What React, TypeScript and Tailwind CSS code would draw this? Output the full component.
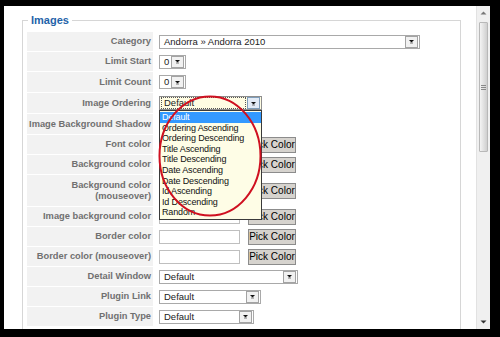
import React from "react";

const ordering = [
  "Default",
  "Ordering Ascending",
  "Ordering Descending",
  "Title Ascending",
  "Title Descending",
  "Date Ascending",
  "Date Descending",
  "Id Ascending",
  "Id Descending",
  "Random",
];

function Arrow({ focused }: { focused?: boolean }) {
  return (
    <div
      className={
        "mr-px flex h-[12px] w-[13px] shrink-0 items-center justify-center border " +
        (focused ? "border-[#7f9db9] bg-[#e3ebf6]" : "border-[#a3a3a3] bg-[#f1f1f1]")
      }
    >
      <svg width="7" height="5" viewBox="0 0 7 5">
        <path d="M1 1h5L3.5 3.5z" fill="#111" />
        <path d="M2 4h3" stroke="#555" strokeWidth="0.8" />
      </svg>
    </div>
  );
}

function Select({ w, text }: { w: string; text: string }) {
  return (
    <div className={`${w} flex h-[14px] items-center border border-[#a9a9a9] bg-white`}>
      <span className="flex-1 whitespace-nowrap pl-[4px] text-[9.5px] leading-none text-[#222]">{text}</span>
      <Arrow />
    </div>
  );
}

function ColorPick() {
  return (
    <div className="flex items-center gap-[8px]">
      <div className="h-[14px] w-[81px] border border-[#bfbfbf] bg-white" />
      <button className="flex h-[16px] w-[48px] items-center justify-center whitespace-nowrap border border-[#8c8c8c] bg-[#d6d3ce] text-[10px] leading-none text-black">
        Pick Color
      </button>
    </div>
  );
}

function OrderingSelect() {
  return (
    <div className="relative w-[103px]">
      <div className="flex h-[14px] items-center border border-[#8e8e8e] bg-[#fffde3]">
        <span className="mx-px flex-1 border border-dotted border-[#555] pl-[2px] text-[9.5px] leading-[10px] text-[#222]">
          Default
        </span>
        <Arrow focused />
      </div>
      <div className="absolute left-0 top-[14px] z-10 w-[103px] border border-[#3a3a3a] bg-[#fefde6] py-px">
        {ordering.map((o, i) => (
          <div
            key={o}
            className={
              "h-[10.6px] whitespace-nowrap pl-[2px] text-[9px] leading-[10.6px] tracking-[-0.15px] " +
              (i === 0 ? "bg-[#3399ff] text-white" : "text-[#111]")
            }
          >
            {o}
          </div>
        ))}
      </div>
      <svg
        className="pointer-events-none absolute -left-px -top-[1px] z-20"
        width="104"
        height="122"
        viewBox="0 0 104 122"
      >
        <ellipse cx="52" cy="61" rx="50.5" ry="59.5" fill="none" stroke="#cf1020" strokeWidth="2" />
      </svg>
    </div>
  );
}

type Row = { label: React.ReactNode; h: string; value: React.ReactNode };

const rows: Row[] = [
  { label: "Category", h: "h-[19px]", value: <Select w="w-[261px]" text="Andorra » Andorra 2010" /> },
  { label: "Limit Start", h: "h-[19px]", value: <Select w="w-[27px]" text="0" /> },
  { label: "Limit Count", h: "h-[20px]", value: <Select w="w-[27px]" text="0" /> },
  { label: "Image Ordering", h: "h-[20px]", value: <OrderingSelect /> },
  // covered by the open dropdown in the screenshot
  { label: "Image Background Shadow", h: "h-[20px]", value: <Select w="w-[60px]" text="" /> },
  { label: "Font color", h: "h-[19px]", value: <ColorPick /> },
  { label: "Background color", h: "h-[19px]", value: <ColorPick /> },
  {
    label: (
      <>
        Background color
        <br />
        (mouseover)
      </>
    ),
    h: "h-[31px]",
    value: <ColorPick />,
  },
  { label: "Image background color", h: "h-[19px]", value: <ColorPick /> },
  { label: "Border color", h: "h-[19px]", value: <ColorPick /> },
  { label: "Border color (mouseover)", h: "h-[19px]", value: <ColorPick /> },
  { label: "Detail Window", h: "h-[19px]", value: <Select w="w-[139px]" text="Default" /> },
  { label: "Plugin Link", h: "h-[19px]", value: <Select w="w-[102px]" text="Default" /> },
  { label: "Plugin Type", h: "h-[19px]", value: <Select w="w-[95px]" text="Default" /> },
];

function Scrollbar() {
  return (
    <div className="flex w-[14px] shrink-0 flex-col border-l border-[#e2e2e2] bg-[#f0f0f0]">
      <div className="flex h-[14px] items-center justify-center">
        <svg width="7" height="4" viewBox="0 0 7 4">
          <path d="M0.5 3.5h6L3.5 0.5z" fill="#777" />
        </svg>
      </div>
      <div className="mx-[2px] mt-[2px] flex h-[130px] items-center justify-center rounded-[1px] border border-[#b8b8b8] bg-gradient-to-r from-[#f4f4f4] to-[#cfcfcf]">
        <div className="flex flex-col gap-px">
          <div className="h-px w-[5px] bg-[#8a8a8a]" />
          <div className="h-px w-[5px] bg-[#8a8a8a]" />
          <div className="h-px w-[5px] bg-[#8a8a8a]" />
        </div>
      </div>
      <div className="flex-1" />
      <div className="flex h-[14px] items-center justify-center">
        <svg width="7" height="4" viewBox="0 0 7 4">
          <path d="M0.5 0.5h6L3.5 3.5z" fill="#333" />
        </svg>
      </div>
    </div>
  );
}

export default function App() {
  return (
    <div
      className="h-[337px] w-[500px] overflow-hidden bg-black pb-[8px] pl-[4px] pr-[10px] pt-[6px]"
      style={{ fontFamily: '"Liberation Sans", Arial, sans-serif' }}
    >
      <div className="flex h-full bg-white">
        <div className="min-w-0 flex-1 overflow-hidden pl-[18px] pr-[15px] pt-[8px]">
          <fieldset className="border border-[#d6d6d6] pb-[4px] pl-[4px] pr-[4px] pt-[6px]">
            <legend className="ml-[1px] px-[3px] text-[11px] font-bold leading-[12px] text-[#2463a9]">
              Images
            </legend>
            <div className="flex flex-col gap-px">
              {rows.map((r, i) => (
                <div key={i} className={`flex ${r.h}`}>
                  <div className="flex w-[126px] shrink-0 items-center justify-end bg-[#f2f2f2] pr-[2px] text-right text-[9.3px] font-bold leading-[11px] text-[#707070]">
                    <span className="whitespace-nowrap">{r.label}</span>
                  </div>
                  <div className="flex items-center pl-[6px]">{r.value}</div>
                </div>
              ))}
            </div>
          </fieldset>
        </div>
        <Scrollbar />
      </div>
    </div>
  );
}
